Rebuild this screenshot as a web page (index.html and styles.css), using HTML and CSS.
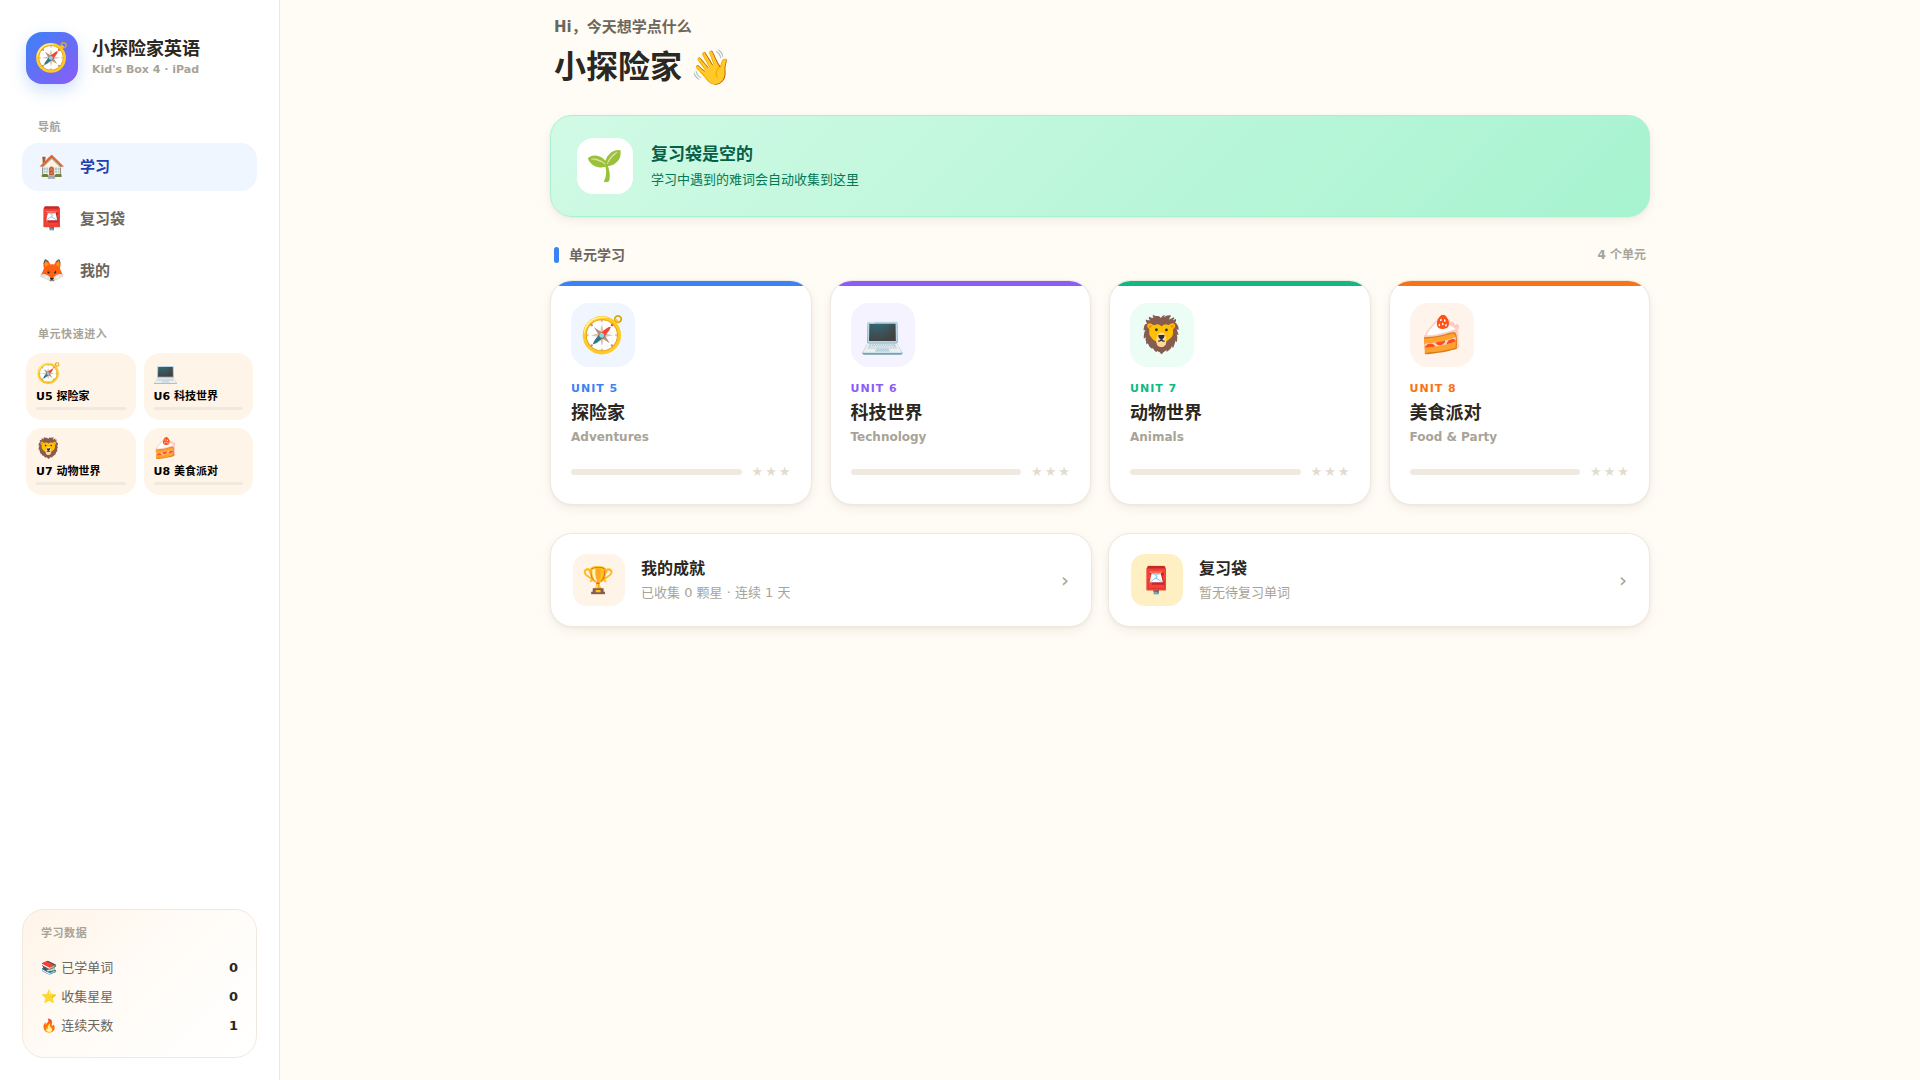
FILE: index.html
```html
<!DOCTYPE html>
<html lang="zh-CN">
<head>
<meta charset="UTF-8">
<meta name="viewport" content="width=device-width, initial-scale=1">
<title>小探险家英语</title>
<link rel="stylesheet" href="styles.css">
</head>
<body>
<div class="app">
  <aside class="sidebar">
    <div class="brand">
      <div class="brand-logo">🧭</div>
      <div class="brand-text">
        <div class="brand-name">小探险家英语</div>
        <div class="brand-sub">Kid's Box 4 · iPad</div>
      </div>
    </div>

    <div class="side-label">导航</div>
    <nav class="nav">
      <a class="nav-item active" href="#learn"><span class="nav-icon">🏠</span><span>学习</span></a>
      <a class="nav-item" href="#review"><span class="nav-icon">📮</span><span>复习袋</span></a>
      <a class="nav-item" href="#me"><span class="nav-icon">🦊</span><span>我的</span></a>
    </nav>

    <div class="side-label quick-label">单元快速进入</div>
    <div class="quick-grid">
      <button class="quick" type="button"><span class="quick-icon">🧭</span><span class="quick-name">U5 探险家</span><span class="quick-bar"></span></button>
      <button class="quick" type="button"><span class="quick-icon">💻</span><span class="quick-name">U6 科技世界</span><span class="quick-bar"></span></button>
      <button class="quick" type="button"><span class="quick-icon">🦁</span><span class="quick-name">U7 动物世界</span><span class="quick-bar"></span></button>
      <button class="quick" type="button"><span class="quick-icon">🍰</span><span class="quick-name">U8 美食派对</span><span class="quick-bar"></span></button>
    </div>

    <section class="stats">
      <h2 class="stats-title">学习数据</h2>
      <div class="stat-row"><span>📚 已学单词</span><b>0</b></div>
      <div class="stat-row"><span>⭐ 收集星星</span><b>0</b></div>
      <div class="stat-row"><span>🔥 连续天数</span><b>1</b></div>
    </section>
  </aside>

  <main class="main">
    <div class="content">
      <header class="greeting">
        <p class="greeting-hi">Hi，今天想学点什么</p>
        <h1 class="greeting-name">小探险家 <span class="wave">👋</span></h1>
      </header>

      <section class="hero">
        <div class="hero-icon">🌱</div>
        <div>
          <h2 class="hero-title">复习袋是空的</h2>
          <p class="hero-sub">学习中遇到的难词会自动收集到这里</p>
        </div>
      </section>

      <div class="section-head">
        <h2 class="section-title">单元学习</h2>
        <span class="section-count">4 个单元</span>
      </div>

      <div class="units">
        <button class="unit blue" type="button">
          <span class="unit-icon">🧭</span>
          <span class="unit-no">UNIT 5</span>
          <span class="unit-name">探险家</span>
          <span class="unit-en">Adventures</span>
          <span class="unit-foot"><span class="unit-bar"></span><span class="stars"><i>★</i><i>★</i><i>★</i></span></span>
        </button>
        <button class="unit purple" type="button">
          <span class="unit-icon">💻</span>
          <span class="unit-no">UNIT 6</span>
          <span class="unit-name">科技世界</span>
          <span class="unit-en">Technology</span>
          <span class="unit-foot"><span class="unit-bar"></span><span class="stars"><i>★</i><i>★</i><i>★</i></span></span>
        </button>
        <button class="unit green" type="button">
          <span class="unit-icon">🦁</span>
          <span class="unit-no">UNIT 7</span>
          <span class="unit-name">动物世界</span>
          <span class="unit-en">Animals</span>
          <span class="unit-foot"><span class="unit-bar"></span><span class="stars"><i>★</i><i>★</i><i>★</i></span></span>
        </button>
        <button class="unit orange" type="button">
          <span class="unit-icon">🍰</span>
          <span class="unit-no">UNIT 8</span>
          <span class="unit-name">美食派对</span>
          <span class="unit-en">Food &amp; Party</span>
          <span class="unit-foot"><span class="unit-bar"></span><span class="stars"><i>★</i><i>★</i><i>★</i></span></span>
        </button>
      </div>

      <div class="links">
        <button class="link-card" type="button">
          <span class="link-icon">🏆</span>
          <span class="link-text"><span class="link-title">我的成就</span><span class="link-sub">已收集 0 颗星 · 连续 1 天</span></span>
          <span class="chevron">›</span>
        </button>
        <button class="link-card" type="button">
          <span class="link-icon amber">📮</span>
          <span class="link-text"><span class="link-title">复习袋</span><span class="link-sub">暂无待复习单词</span></span>
          <span class="chevron">›</span>
        </button>
      </div>
    </div>
  </main>
</div>
</body>
</html>
```
FILE: styles.css
```css
:root {
  --ink: #2b2722;
  --ink-2: #6b665e;
  --ink-3: #a8a397;
  --line: #f0e9df;
  --cream: #fff4e8;
  --blue: #3b82f6;
  --shadow: 0 4px 12px rgba(60, 40, 20, 0.06), 0 1px 3px rgba(60, 40, 20, 0.06);
}

* { box-sizing: border-box; margin: 0; }

body {
  background: #fffcf5;
  color: var(--ink);
  font-family: "DejaVu Sans", "Noto Sans CJK SC", "Noto Color Emoji", sans-serif;
}

button {
  border: 0;
  padding: 0;
  font: inherit;
  color: inherit;
  text-align: left;
  cursor: pointer;
}

.app { display: flex; min-height: 100vh; }

/* Sidebar */
.sidebar {
  display: flex;
  flex-direction: column;
  flex: 0 0 280px;
  padding: 32px 22px 22px;
  background: #fff;
  border-right: 1px solid var(--line);
}

.brand { display: flex; align-items: center; gap: 14px; padding: 0 4px; }

.brand-logo {
  display: grid;
  place-items: center;
  width: 52px;
  height: 52px;
  border-radius: 16px;
  background: linear-gradient(135deg, #3b82f6, #8b5cf6);
  box-shadow: 0 6px 16px rgba(59, 130, 246, 0.25);
  font-size: 28px;
  line-height: 32px;
}

.brand-text { padding-bottom: 2px; }
.brand-name { font-size: 18px; font-weight: 700; line-height: 26px; }
.brand-sub { font-size: 11px; font-weight: 700; line-height: 16px; color: var(--ink-3); }

.side-label {
  margin: 35px 16px 7px;
  font-size: 11px;
  font-weight: 700;
  line-height: 17px;
  letter-spacing: 0.05em;
  color: var(--ink-3);
}

.nav { display: flex; flex-direction: column; gap: 4px; }

.nav-item {
  display: flex;
  align-items: center;
  gap: 14px;
  height: 48px;
  padding: 0 16px;
  border-radius: 16px;
  color: var(--ink-2);
  font-size: 15px;
  font-weight: 700;
  line-height: 22px;
  text-decoration: none;
}

.nav-item.active { background: #eff6ff; color: #1e40af; }
.nav-icon {
  display: flex;
  justify-content: center;
  width: 28px;
  font-size: 22px;
  line-height: 26px;
}

.quick-label { margin-top: 31px; margin-bottom: 10px; }

.quick-grid {
  display: grid;
  grid-template-columns: 1fr 1fr;
  gap: 8px;
  padding: 0 4px;
}

.quick {
  display: flex;
  flex-direction: column;
  padding: 8px 10px 10px;
  border-radius: 16px;
  background: var(--cream);
  color: #000;
}

.quick-icon { font-size: 20px; line-height: 24px; }
.quick-name { padding-top: 2px; font-size: 11px; font-weight: 700; line-height: 20px; }
.quick-bar { height: 3px; border-radius: 2px; background: var(--line); }

.stats {
  margin-top: auto;
  padding: 15px 18px 17px;
  border: 1px solid var(--line);
  border-radius: 22px;
  background: linear-gradient(135deg, #fff4e8, #fffcf8 50%, #fff);
}

.stats-title {
  margin-bottom: 11px;
  font-size: 11px;
  line-height: 17px;
  letter-spacing: 0.05em;
  color: var(--ink-3);
}

.stat-row {
  display: flex;
  justify-content: space-between;
  align-items: center;
  font-size: 13px;
  line-height: 29px;
  color: var(--ink-2);
}

.stat-row b { color: var(--ink); }

/* Main column */
.main { flex: 1; padding: 0 32px; }
.content { max-width: 1100px; margin: 0 auto; }

.greeting { padding: 17px 4px 27px; }
.greeting-hi { font-size: 15px; font-weight: 700; line-height: 20px; color: var(--ink-2); }

.greeting-name {
  display: flex;
  align-items: center;
  gap: 8px;
  margin-top: 9px;
  font-size: 32px;
  font-weight: 700;
  line-height: 42px;
}

.wave { font-size: 34px; }

.hero {
  display: flex;
  align-items: center;
  gap: 18px;
  padding: 22px 26px;
  border: 1px solid #a7f3d0;
  border-radius: 22px;
  background: linear-gradient(135deg, #d1fae5, #a7f3d0);
  box-shadow: var(--shadow);
}

.hero-icon {
  display: grid;
  place-items: center;
  width: 56px;
  height: 56px;
  border-radius: 16px;
  background: #fff;
  font-size: 30px;
  line-height: 34px;
}

.hero-title { font-size: 17px; font-weight: 700; line-height: 26px; color: #065f46; }
.hero-sub { margin-top: 2px; font-size: 13px; line-height: 22px; color: #047857; }

.section-head {
  display: flex;
  justify-content: space-between;
  align-items: center;
  padding: 28px 4px 15px;
}

.section-title {
  display: flex;
  align-items: center;
  gap: 10px;
  font-size: 14px;
  line-height: 20px;
  color: var(--ink-2);
}

.section-title::before {
  content: "";
  width: 5px;
  height: 16px;
  border-radius: 3px;
  background: var(--blue);
}

.section-count { font-size: 12px; font-weight: 700; line-height: 20px; color: var(--ink-3); }

.units { display: grid; grid-template-columns: repeat(4, 1fr); gap: 18px; }

.unit {
  --accent: var(--blue);
  --tint: #eff6ff;
  display: flex;
  flex-direction: column;
  overflow: hidden;
  padding: 0 20px 22px;
  border: 1px solid var(--line);
  border-radius: 22px;
  background: #fff;
  box-shadow: var(--shadow);
}

.unit::before {
  content: "";
  height: 5px;
  margin: 0 -20px 17px;
  background: var(--accent);
}

.unit.purple { --accent: #8b5cf6; --tint: #f5f3ff; }
.unit.green { --accent: #10b981; --tint: #ecfdf5; }
.unit.orange { --accent: #f97316; --tint: #fff4eb; }

.unit-icon {
  display: grid;
  place-items: center;
  width: 64px;
  height: 64px;
  border-radius: 18px;
  background: var(--tint);
  font-size: 36px;
  line-height: 40px;
}

.unit-no {
  margin-top: 14px;
  font-size: 11px;
  font-weight: 700;
  line-height: 16px;
  letter-spacing: 1px;
  color: var(--accent);
}

.unit-name { margin-top: 2px; font-size: 18px; font-weight: 700; line-height: 28px; }
.unit-en { margin-top: 1px; font-size: 12px; font-weight: 700; line-height: 18px; color: var(--ink-3); }
.unit-foot { display: flex; align-items: center; gap: 10px; margin-top: 16px; }
.unit-bar { flex: 1; height: 6px; border-radius: 3px; background: var(--line); }
.stars { display: flex; gap: 2px; font-size: 13px; line-height: 20px; color: #e2dccd; }
.stars i { font-style: normal; }

.links { display: grid; grid-template-columns: 1fr 1fr; gap: 16px; margin-top: 28px; }

.link-card {
  display: flex;
  align-items: center;
  gap: 16px;
  padding: 20px 22px;
  border: 1px solid var(--line);
  border-radius: 22px;
  background: #fff;
  box-shadow: var(--shadow);
}

.link-icon {
  display: grid;
  place-items: center;
  width: 52px;
  height: 52px;
  border-radius: 14px;
  background: var(--cream);
  font-size: 26px;
  line-height: 32px;
}

.link-icon.amber { background: #fef0c3; }
.link-text { display: flex; flex: 1; flex-direction: column; gap: 1px; padding-top: 1px; }
.link-title { font-size: 16px; font-weight: 700; line-height: 24px; }
.link-sub { font-size: 13px; line-height: 22px; color: var(--ink-3); }
.chevron { font-size: 20px; line-height: 24px; color: var(--ink-3); }
```
